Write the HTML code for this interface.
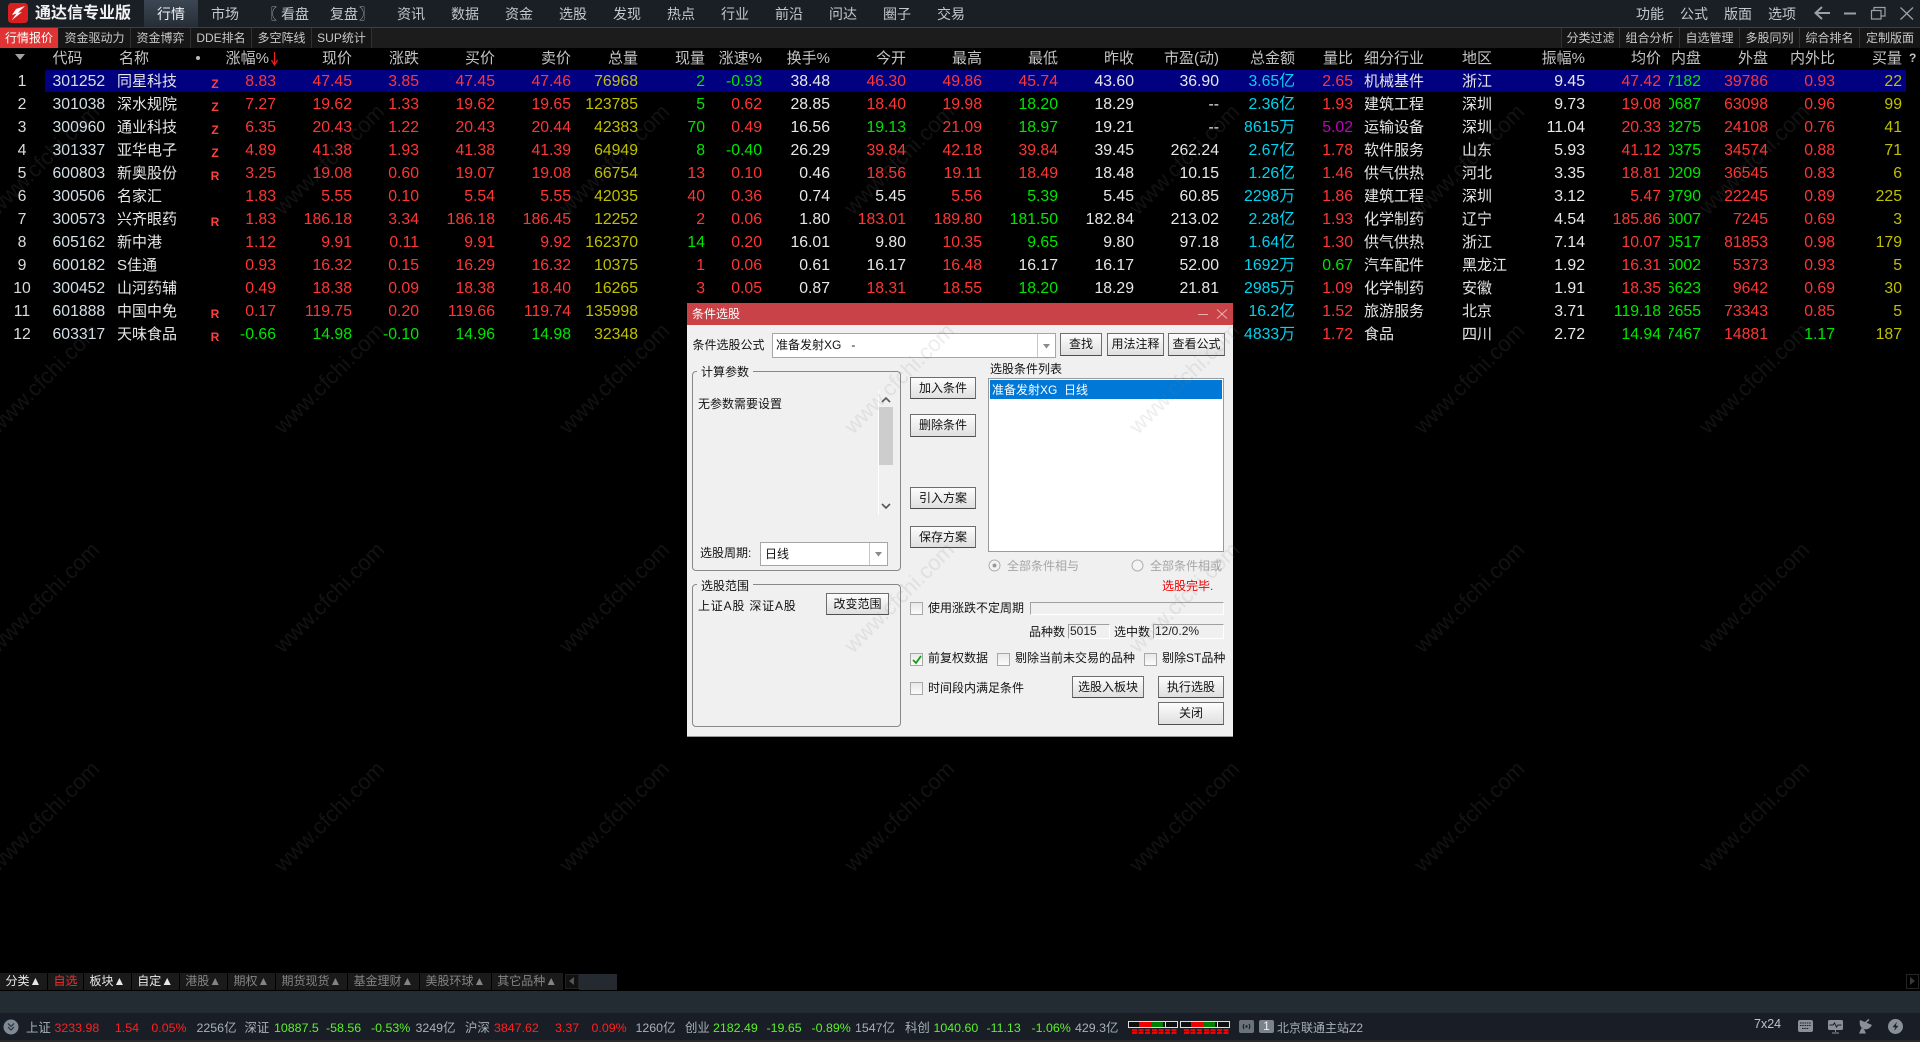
<!DOCTYPE html>
<html lang="zh-CN"><head><meta charset="utf-8"><title>通达信专业版</title>
<style>
html,body{margin:0;padding:0;background:#000;width:1920px;height:1042px;overflow:hidden}
#app{position:relative;width:1920px;height:1042px;overflow:hidden;background:#000;font-family:"Liberation Sans","Noto Sans CJK SC",sans-serif;color:#ddd}
.t,.b{position:absolute;white-space:nowrap}
.t{line-height:16px}
.m{top:6px;font-size:14px;color:#c4c8cc;line-height:16px}
.s{position:absolute;top:28px;height:20px;line-height:20px;font-size:12px;color:#c8c8c8;text-align:center;background:#161616;border-right:1px solid #303030;box-sizing:border-box}
.h{position:absolute;top:47px;line-height:23px;height:23px;font-size:15px;color:#c4c4c4;white-space:nowrap}
.row{position:absolute;left:0;width:1920px;height:23px;line-height:23px;font-size:15.8px}
.row i{position:absolute;top:0;font-style:normal;white-space:nowrap}
.ix{left:0;width:44px;text-align:center;color:#dcdcdc}
.cd{left:52.5px;color:#d4e0e6}
.nm{left:117px;font-size:15px;color:#e6e6e6}
.fl{left:210px;width:10px;text-align:center;top:3px!important;font-size:12px;font-weight:bold;color:#ff4040}
.i1{left:1364px;font-size:15px;color:#e6e6e6}
.i2{left:1462px;font-size:15px;color:#e6e6e6}
.c1{right:1644px}.c2{right:1568px}.c3{right:1501px}.c4{right:1425px}.c5{right:1349px}.c6{right:1282px}.c7{right:1215px}.c8{right:1158px}.c9{right:1090px}.c10{right:1014px}.c11{right:938px}.c12{right:862px}.c13{right:786px}.c14{right:701px}.c15{right:625px}.c16{right:567px}.c17{right:335px}.c18{right:259px}.c20{right:152px}.c21{right:85px}.c22{right:18px}
.c19{left:1669px;width:32px;overflow:hidden;direction:rtl;text-align:right;color:#00e600}
.r{color:#ff3636}.g{color:#00e600}.w{color:#e8e8e8}.y{color:#c0c000}.u{color:#00d4f0}.p{color:#c000c0}
#dlg{position:absolute;left:687px;top:303px;width:546px;height:434px;background:#f0f0f0;border-bottom:1px solid #999;box-sizing:border-box}
.d{color:#111;font-size:12px}
.btn{position:absolute;box-sizing:border-box;border:1px solid #6e6e6e;border-bottom-color:#4e4e4e;background:linear-gradient(#fdfdfd,#dfdfdf);color:#111;font-size:12px;line-height:20px;text-align:center;white-space:nowrap}
.cb{position:absolute;width:13px;height:13px;box-sizing:border-box;border:1px solid #a8a8a8;background:linear-gradient(#e8e8e8,#fbfbfb)}
.grp{position:absolute;box-sizing:border-box;border:1px solid #888;border-radius:4px}
.fld{position:absolute;box-sizing:border-box;border:1px solid #a0a0a0;border-right-color:#fff;border-bottom-color:#fff;font-size:12px;line-height:13px;color:#222}
.bt{position:absolute;top:973px;height:17px;line-height:17px;font-size:12px;text-align:center;background:#1a1a1a;color:#e8e8e8;white-space:nowrap}
.dim{color:#848484}
.st{position:absolute;top:1020px;line-height:16px;font-size:12.4px;white-space:nowrap;color:#a8b0b8}
.sr{color:#ff2020}.sg{color:#5cf02c}
</style></head><body><div id="app">

<!-- title bar -->
<div class="b" style="left:0;top:0;width:1920px;height:27px;background:#1a1f26"></div>
<div class="b" style="left:0;top:27px;width:1920px;height:1px;background:#3a4048"></div>
<svg class="b" style="left:8px;top:3px" width="20" height="20" viewBox="0 0 20 20"><rect width="20" height="20" rx="3.5" fill="#d81e1e"/><path d="M17 3 8 6 4 12 8.500 10.500 3.500 17.500 14 9 10 9.800 z" fill="#fff"/></svg>
<div class="t" style="left:35px;top:5px;font-size:16px;font-weight:bold;color:#f2f2f2;line-height:18px">通达信专业版</div>
<div class="b" style="left:144px;top:0;width:54px;height:27px;background:linear-gradient(#3c4754,#262d36)"></div>
<div class="t m" style="left:157px;color:#eef0f2">行情</div>
<div class="t m" style="left:211px">市场</div>
<div class="t m" style="left:263px">〖</div>
<div class="t m" style="left:281px">看盘</div>
<div class="t m" style="left:330px">复盘</div>
<div class="t m" style="left:359px">〗</div>
<div class="t m" style="left:397px">资讯</div>
<div class="t m" style="left:451px">数据</div>
<div class="t m" style="left:505px">资金</div>
<div class="t m" style="left:559px">选股</div>
<div class="t m" style="left:613px">发现</div>
<div class="t m" style="left:667px">热点</div>
<div class="t m" style="left:721px">行业</div>
<div class="t m" style="left:775px">前沿</div>
<div class="t m" style="left:829px">问达</div>
<div class="t m" style="left:883px">圈子</div>
<div class="t m" style="left:937px">交易</div>
<div class="t m" style="left:1636px">功能</div>
<div class="t m" style="left:1680px">公式</div>
<div class="t m" style="left:1724px">版面</div>
<div class="t m" style="left:1768px">选项</div>
<svg class="b" style="left:1812px;top:4px" width="104" height="18" viewBox="0 0 104 18" fill="none" stroke="#9ca0a5" stroke-width="1.6"><path d="M18 9H4M10 3 3.500 9 10 15" stroke-width="2"/><path d="M32 9.500H44" stroke-width="2"/><path d="M62 6V3.500H73V12H69M59.500 6.500H69V15H59.500Z" stroke-width="1.2"/><path d="M88.500 3.500 101 15.500M101 3.500 88.500 15.500" stroke-width="1.3"/></svg>

<!-- sub toolbar -->
<div class="b" style="left:0;top:28px;width:1920px;height:20px;background:#1c1c1c"></div>
<div class="s" style="left:0;width:58px;background:#e03434;color:#fff;border:0">行情报价</div>
<div class="s" style="left:59px;width:72px">资金驱动力</div>
<div class="s" style="left:131px;width:60px">资金博弈</div>
<div class="s" style="left:191px;width:61px">DDE排名</div>
<div class="s" style="left:252px;width:60px">多空阵线</div>
<div class="s" style="left:312px;width:60px">SUP统计</div>
<div class="s" style="left:1561px;width:59px;border-left:1px solid #303030">分类过滤</div>
<div class="s" style="left:1620px;width:60px">组合分析</div>
<div class="s" style="left:1680px;width:60px">自选管理</div>
<div class="s" style="left:1740px;width:60px">多股同列</div>
<div class="s" style="left:1800px;width:60px">综合排名</div>
<div class="s" style="left:1860px;width:60px;border-right:0">定制版面</div>

<!-- table header -->
<svg class="b" style="left:15px;top:54px" width="11" height="7"><path d="M0 0H10L5 6Z" fill="#a0a0a0"/></svg>
<div class="h" style="left:52.500px">代码</div>
<div class="h" style="left:119px">名称</div>
<div class="b" style="left:196px;top:56px;width:4px;height:4px;border-radius:2px;background:#bbb"></div>
<div class="h" style="right:1651px">涨幅%</div>
<svg class="b" style="left:271px;top:52px" width="7" height="14"><path d="M3.500 0V12M0.500 8 3.500 13 6.500 8" fill="none" stroke="#f02020" stroke-width="1.2"/></svg>
<div class="h" style="right:1568px">现价</div>
<div class="h" style="right:1501px">涨跌</div>
<div class="h" style="right:1425px">买价</div>
<div class="h" style="right:1349px">卖价</div>
<div class="h" style="right:1282px">总量</div>
<div class="h" style="right:1215px">现量</div>
<div class="h" style="right:1158px">涨速%</div>
<div class="h" style="right:1090px">换手%</div>
<div class="h" style="right:1014px">今开</div>
<div class="h" style="right:938px">最高</div>
<div class="h" style="right:862px">最低</div>
<div class="h" style="right:786px">昨收</div>
<div class="h" style="right:701px">市盈(动)</div>
<div class="h" style="right:625px">总金额</div>
<div class="h" style="right:567px">量比</div>
<div class="h" style="left:1364px">细分行业</div>
<div class="h" style="left:1462px">地区</div>
<div class="h" style="right:335px">振幅%</div>
<div class="h" style="right:259px">均价</div>
<div class="h" style="right:219px">内盘</div>
<div class="h" style="right:152px">外盘</div>
<div class="h" style="right:85px">内外比</div>
<div class="h" style="right:18px">买量</div>
<div class="h" style="left:1909px;font-size:12px;font-weight:bold">?</div>

<!-- rows -->
<div class="b" style="left:45px;top:70px;width:1861px;height:22px;background:#000080"></div>
<div class="row" style="top:70px"><i class="ix">1</i><i class="cd">301252</i><i class="nm">同星科技</i><i class="fl">Z</i><i class="c1 r">8.83</i><i class="c2 r">47.45</i><i class="c3 r">3.85</i><i class="c4 r">47.45</i><i class="c5 r">47.46</i><i class="c6 y">76968</i><i class="c7 g">2</i><i class="c8 g">-0.93</i><i class="c9 w">38.48</i><i class="c10 r">46.30</i><i class="c11 r">49.86</i><i class="c12 r">45.74</i><i class="c13 w">43.60</i><i class="c14 w">36.90</i><i class="c15 u">3.65亿</i><i class="c16 r">2.65</i><i class="i1">机械基件</i><i class="i2">浙江</i><i class="c17 w">9.45</i><i class="c18 r">47.42</i><i class="c19">37182</i><i class="c20 r">39786</i><i class="c21 r">0.93</i><i class="c22 y">22</i></div>
<div class="row" style="top:93px"><i class="ix">2</i><i class="cd">301038</i><i class="nm">深水规院</i><i class="fl">Z</i><i class="c1 r">7.27</i><i class="c2 r">19.62</i><i class="c3 r">1.33</i><i class="c4 r">19.62</i><i class="c5 r">19.65</i><i class="c6 y">123785</i><i class="c7 g">5</i><i class="c8 r">0.62</i><i class="c9 w">28.85</i><i class="c10 r">18.40</i><i class="c11 r">19.98</i><i class="c12 g">18.20</i><i class="c13 w">18.29</i><i class="c14 w">--</i><i class="c15 u">2.36亿</i><i class="c16 r">1.93</i><i class="i1">建筑工程</i><i class="i2">深圳</i><i class="c17 w">9.73</i><i class="c18 r">19.08</i><i class="c19">60687</i><i class="c20 r">63098</i><i class="c21 r">0.96</i><i class="c22 y">99</i></div>
<div class="row" style="top:116px"><i class="ix">3</i><i class="cd">300960</i><i class="nm">通业科技</i><i class="fl">Z</i><i class="c1 r">6.35</i><i class="c2 r">20.43</i><i class="c3 r">1.22</i><i class="c4 r">20.43</i><i class="c5 r">20.44</i><i class="c6 y">42383</i><i class="c7 g">70</i><i class="c8 r">0.49</i><i class="c9 w">16.56</i><i class="c10 g">19.13</i><i class="c11 r">21.09</i><i class="c12 g">18.97</i><i class="c13 w">19.21</i><i class="c14 w">--</i><i class="c15 u">8615万</i><i class="c16 p">5.02</i><i class="i1">运输设备</i><i class="i2">深圳</i><i class="c17 w">11.04</i><i class="c18 r">20.33</i><i class="c19">18275</i><i class="c20 r">24108</i><i class="c21 r">0.76</i><i class="c22 y">41</i></div>
<div class="row" style="top:139px"><i class="ix">4</i><i class="cd">301337</i><i class="nm">亚华电子</i><i class="fl">Z</i><i class="c1 r">4.89</i><i class="c2 r">41.38</i><i class="c3 r">1.93</i><i class="c4 r">41.38</i><i class="c5 r">41.39</i><i class="c6 y">64949</i><i class="c7 g">8</i><i class="c8 g">-0.40</i><i class="c9 w">26.29</i><i class="c10 r">39.84</i><i class="c11 r">42.18</i><i class="c12 r">39.84</i><i class="c13 w">39.45</i><i class="c14 w">262.24</i><i class="c15 u">2.67亿</i><i class="c16 r">1.78</i><i class="i1">软件服务</i><i class="i2">山东</i><i class="c17 w">5.93</i><i class="c18 r">41.12</i><i class="c19">30375</i><i class="c20 r">34574</i><i class="c21 r">0.88</i><i class="c22 y">71</i></div>
<div class="row" style="top:162px"><i class="ix">5</i><i class="cd">600803</i><i class="nm">新奥股份</i><i class="fl">R</i><i class="c1 r">3.25</i><i class="c2 r">19.08</i><i class="c3 r">0.60</i><i class="c4 r">19.07</i><i class="c5 r">19.08</i><i class="c6 y">66754</i><i class="c7 r">13</i><i class="c8 r">0.10</i><i class="c9 w">0.46</i><i class="c10 r">18.56</i><i class="c11 r">19.11</i><i class="c12 r">18.49</i><i class="c13 w">18.48</i><i class="c14 w">10.15</i><i class="c15 u">1.26亿</i><i class="c16 r">1.46</i><i class="i1">供气供热</i><i class="i2">河北</i><i class="c17 w">3.35</i><i class="c18 r">18.81</i><i class="c19">30209</i><i class="c20 r">36545</i><i class="c21 r">0.83</i><i class="c22 y">6</i></div>
<div class="row" style="top:185px"><i class="ix">6</i><i class="cd">300506</i><i class="nm">名家汇</i><i class="c1 r">1.83</i><i class="c2 r">5.55</i><i class="c3 r">0.10</i><i class="c4 r">5.54</i><i class="c5 r">5.55</i><i class="c6 y">42035</i><i class="c7 r">40</i><i class="c8 r">0.36</i><i class="c9 w">0.74</i><i class="c10 w">5.45</i><i class="c11 r">5.56</i><i class="c12 g">5.39</i><i class="c13 w">5.45</i><i class="c14 w">60.85</i><i class="c15 u">2298万</i><i class="c16 r">1.86</i><i class="i1">建筑工程</i><i class="i2">深圳</i><i class="c17 w">3.12</i><i class="c18 r">5.47</i><i class="c19">19790</i><i class="c20 r">22245</i><i class="c21 r">0.89</i><i class="c22 y">225</i></div>
<div class="row" style="top:208px"><i class="ix">7</i><i class="cd">300573</i><i class="nm">兴齐眼药</i><i class="fl">R</i><i class="c1 r">1.83</i><i class="c2 r">186.18</i><i class="c3 r">3.34</i><i class="c4 r">186.18</i><i class="c5 r">186.45</i><i class="c6 y">12252</i><i class="c7 r">2</i><i class="c8 r">0.06</i><i class="c9 w">1.80</i><i class="c10 r">183.01</i><i class="c11 r">189.80</i><i class="c12 g">181.50</i><i class="c13 w">182.84</i><i class="c14 w">213.02</i><i class="c15 u">2.28亿</i><i class="c16 r">1.93</i><i class="i1">化学制药</i><i class="i2">辽宁</i><i class="c17 w">4.54</i><i class="c18 r">185.86</i><i class="c19">6007</i><i class="c20 r">7245</i><i class="c21 r">0.69</i><i class="c22 y">3</i></div>
<div class="row" style="top:231px"><i class="ix">8</i><i class="cd">605162</i><i class="nm">新中港</i><i class="c1 r">1.12</i><i class="c2 r">9.91</i><i class="c3 r">0.11</i><i class="c4 r">9.91</i><i class="c5 r">9.92</i><i class="c6 y">162370</i><i class="c7 g">14</i><i class="c8 r">0.20</i><i class="c9 w">16.01</i><i class="c10 w">9.80</i><i class="c11 r">10.35</i><i class="c12 g">9.65</i><i class="c13 w">9.80</i><i class="c14 w">97.18</i><i class="c15 u">1.64亿</i><i class="c16 r">1.30</i><i class="i1">供气供热</i><i class="i2">浙江</i><i class="c17 w">7.14</i><i class="c18 r">10.07</i><i class="c19">80517</i><i class="c20 r">81853</i><i class="c21 r">0.98</i><i class="c22 y">179</i></div>
<div class="row" style="top:254px"><i class="ix">9</i><i class="cd">600182</i><i class="nm">S佳通</i><i class="c1 r">0.93</i><i class="c2 r">16.32</i><i class="c3 r">0.15</i><i class="c4 r">16.29</i><i class="c5 r">16.32</i><i class="c6 y">10375</i><i class="c7 r">1</i><i class="c8 r">0.06</i><i class="c9 w">0.61</i><i class="c10 w">16.17</i><i class="c11 r">16.48</i><i class="c12 w">16.17</i><i class="c13 w">16.17</i><i class="c14 w">52.00</i><i class="c15 u">1692万</i><i class="c16 g">0.67</i><i class="i1">汽车配件</i><i class="i2">黑龙江</i><i class="c17 w">1.92</i><i class="c18 r">16.31</i><i class="c19">5002</i><i class="c20 r">5373</i><i class="c21 r">0.93</i><i class="c22 y">5</i></div>
<div class="row" style="top:277px"><i class="ix">10</i><i class="cd">300452</i><i class="nm">山河药辅</i><i class="c1 r">0.49</i><i class="c2 r">18.38</i><i class="c3 r">0.09</i><i class="c4 r">18.38</i><i class="c5 r">18.40</i><i class="c6 y">16265</i><i class="c7 r">3</i><i class="c8 r">0.05</i><i class="c9 w">0.87</i><i class="c10 r">18.31</i><i class="c11 r">18.55</i><i class="c12 g">18.20</i><i class="c13 w">18.29</i><i class="c14 w">21.81</i><i class="c15 u">2985万</i><i class="c16 r">1.09</i><i class="i1">化学制药</i><i class="i2">安徽</i><i class="c17 w">1.91</i><i class="c18 r">18.35</i><i class="c19">6623</i><i class="c20 r">9642</i><i class="c21 r">0.69</i><i class="c22 y">30</i></div>
<div class="row" style="top:300px"><i class="ix">11</i><i class="cd">601888</i><i class="nm">中国中免</i><i class="fl">R</i><i class="c1 r">0.17</i><i class="c2 r">119.75</i><i class="c3 r">0.20</i><i class="c4 r">119.66</i><i class="c5 r">119.74</i><i class="c6 y">135998</i><i class="c15 u">16.2亿</i><i class="c16 r">1.52</i><i class="i1">旅游服务</i><i class="i2">北京</i><i class="c17 w">3.71</i><i class="c18 g">119.18</i><i class="c19">62655</i><i class="c20 r">73343</i><i class="c21 r">0.85</i><i class="c22 y">5</i></div>
<div class="row" style="top:323px"><i class="ix">12</i><i class="cd">603317</i><i class="nm">天味食品</i><i class="fl">R</i><i class="c1 g">-0.66</i><i class="c2 g">14.98</i><i class="c3 g">-0.10</i><i class="c4 g">14.96</i><i class="c5 g">14.98</i><i class="c6 y">32348</i><i class="c15 u">4833万</i><i class="c16 r">1.72</i><i class="i1">食品</i><i class="i2">四川</i><i class="c17 w">2.72</i><i class="c18 g">14.94</i><i class="c19">17467</i><i class="c20 r">14881</i><i class="c21 g">1.17</i><i class="c22 y">187</i></div>

<!-- dialog -->
<div id="dlg"></div>
<div class="b" style="left:687px;top:303px;width:546px;height:22px;background:#c94247"></div>
<div class="t" style="left:692px;top:306px;font-size:12px;color:#fff">条件选股</div>
<svg class="b" style="left:1195px;top:306px" width="36" height="16" fill="none" stroke="#eab0b0" stroke-width="1"><path d="M3 8.500H13M22 3.500 32 12.500M32 3.500 22 12.500"/></svg>

<div class="t d" style="left:692.500px;top:337px">条件选股公式</div>
<div class="b" style="left:772px;top:333px;width:284px;height:25px;background:#fff;border:1px solid #a6a6a6;box-sizing:border-box"></div>
<div class="b" style="left:1037px;top:334px;width:1px;height:23px;background:#c8c8c8"></div>
<svg class="b" style="left:1043px;top:344px" width="7" height="5"><path d="M0 0H7L3.500 4.500Z" fill="#8a8a8a"/></svg>
<div class="t d" style="left:776px;top:337px">准备发射XG &nbsp;&nbsp;-</div>
<div class="btn" style="left:1060px;top:333px;width:42px;height:23px">查找</div>
<div class="btn" style="left:1107px;top:333px;width:57px;height:23px">用法注释</div>
<div class="btn" style="left:1168px;top:333px;width:57px;height:23px">查看公式</div>

<div class="t d" style="left:990px;top:361px">选股条件列表</div>
<div class="b" style="left:988px;top:378px;width:236px;height:174px;background:#fff;border:1px solid #9a9a9a;box-sizing:border-box"></div>
<div class="b" style="left:990px;top:380px;width:232px;height:19px;background:#0078d7"></div>
<div class="t" style="left:992px;top:382px;font-size:12px;color:#fff">准备发射XG&nbsp;&nbsp;日线</div>

<div class="grp" style="left:692px;top:371px;width:209px;height:200px"></div>
<div class="t d" style="left:697px;top:364px;background:#f0f0f0;padding:0 4px">计算参数</div>
<div class="t d" style="left:698px;top:396px">无参数需要设置</div>
<div class="b" style="left:878px;top:390px;width:1px;height:125px;background:#fff"></div>
<div class="b" style="left:879px;top:407px;width:14px;height:58px;background:#cdcdcd"></div>
<svg class="b" style="left:881px;top:396px" width="10" height="7" fill="none" stroke="#555" stroke-width="1.6"><path d="M1 6 5 2 9 6"/></svg>
<svg class="b" style="left:881px;top:503px" width="10" height="7" fill="none" stroke="#555" stroke-width="1.6"><path d="M1 1 5 5 9 1"/></svg>
<div class="t d" style="left:700px;top:545px">选股周期:</div>
<div class="b" style="left:760px;top:542px;width:128px;height:24px;background:#fff;border:1px solid #a6a6a6;box-sizing:border-box"></div>
<div class="b" style="left:869px;top:543px;width:1px;height:22px;background:#c8c8c8"></div>
<svg class="b" style="left:875px;top:552px" width="7" height="5"><path d="M0 0H7L3.500 4.500Z" fill="#8a8a8a"/></svg>
<div class="t d" style="left:765px;top:546px">日线</div>

<div class="btn" style="left:910px;top:377px;width:66px;height:22px">加入条件</div>
<div class="btn" style="left:910px;top:414px;width:66px;height:23px">删除条件</div>
<div class="btn" style="left:910px;top:487px;width:66px;height:22px">引入方案</div>
<div class="btn" style="left:910px;top:526px;width:66px;height:22px">保存方案</div>

<svg class="b" style="left:988px;top:559px" width="13" height="13"><circle cx="6.500" cy="6.500" r="5.500" fill="#f4f4f4" stroke="#b0b0b0"/><circle cx="6.500" cy="6.500" r="2" fill="#999"/></svg>
<div class="t" style="left:1007px;top:558px;font-size:12px;color:#a6a6a6">全部条件相与</div>
<svg class="b" style="left:1131px;top:559px" width="13" height="13"><circle cx="6.500" cy="6.500" r="5.500" fill="#f4f4f4" stroke="#b0b0b0"/></svg>
<div class="t" style="left:1150px;top:558px;font-size:12px;color:#a6a6a6">全部条件相或</div>
<div class="t" style="left:1162px;top:578px;font-size:12px;color:#f00000">选股完毕.</div>

<div class="grp" style="left:692px;top:584px;width:209px;height:143px"></div>
<div class="t d" style="left:697px;top:578px;background:#f0f0f0;padding:0 4px">选股范围</div>
<div class="t d" style="left:698px;top:598px;letter-spacing:.8px">上证A股 深证A股</div>
<div class="btn" style="left:826px;top:593px;width:63px;height:22px">改变范围</div>

<div class="cb" style="left:910px;top:602px"></div>
<div class="t d" style="left:928px;top:600px">使用涨跌不定周期</div>
<div class="fld" style="left:1030px;top:602px;width:194px;height:13px"></div>
<div class="t d" style="left:1029px;top:624px">品种数</div>
<div class="fld" style="left:1068px;top:624px;width:42px;height:15px;padding-left:1px">5015</div>
<div class="t d" style="left:1114px;top:624px">选中数</div>
<div class="fld" style="left:1153px;top:624px;width:71px;height:15px;padding-left:1px">12/0.2%</div>

<div class="cb" style="left:910px;top:653px"></div>
<svg class="b" style="left:912px;top:655px" width="10" height="10"><path d="M1 5 4 8 9 1" fill="none" stroke="#1a9a1a" stroke-width="1.800"/></svg>
<div class="t d" style="left:928px;top:650px">前复权数据</div>
<div class="cb" style="left:997px;top:653px"></div>
<div class="t d" style="left:1015px;top:650px">剔除当前未交易的品种</div>
<div class="cb" style="left:1144px;top:653px"></div>
<div class="t d" style="left:1162px;top:650px">剔除ST品种</div>
<div class="cb" style="left:910px;top:682px"></div>
<div class="t d" style="left:928px;top:680px">时间段内满足条件</div>
<div class="btn" style="left:1072px;top:676px;width:72px;height:22px">选股入板块</div>
<div class="btn" style="left:1158px;top:676px;width:66px;height:22px">执行选股</div>
<div class="btn" style="left:1158px;top:702px;width:66px;height:23px">关闭</div>

<!-- bottom tabs -->
<div class="bt" style="left:0;width:47px">分类▲</div>
<div class="bt" style="left:48px;width:35px;color:#f03030">自选</div>
<div class="bt" style="left:84px;width:47px">板块▲</div>
<div class="bt" style="left:132px;width:46.500px">自定▲</div>
<div class="bt dim" style="left:179.500px;width:47.500px">港股▲</div>
<div class="bt dim" style="left:228px;width:47px">期权▲</div>
<div class="bt dim" style="left:276px;width:71px">期货现货▲</div>
<div class="bt dim" style="left:348px;width:71px">基金理财▲</div>
<div class="bt dim" style="left:420px;width:71px">美股环球▲</div>
<div class="bt dim" style="left:492px;width:70.500px">其它品种▲</div>
<div class="b" style="left:565px;top:974px;width:14px;height:15px;background:#111;border:1px solid #222;box-sizing:border-box"></div>
<svg class="b" style="left:569px;top:977px" width="6" height="9"><path d="M5 0V8L0 4Z" fill="#555"/></svg>
<div class="b" style="left:579px;top:974px;width:38px;height:16px;background:#252a30"></div>
<div class="b" style="left:1906px;top:974px;width:13px;height:15px;border:1px solid #252525;box-sizing:border-box"></div>
<svg class="b" style="left:1910px;top:977px" width="6" height="9"><path d="M0 0V8L5 4Z" fill="#3a3a3a"/></svg>

<!-- status -->
<div class="b" style="left:0;top:991px;width:1920px;height:22px;background:#232b33"></div>
<div class="b" style="left:0;top:1013px;width:1920px;height:27px;background:#191e26"></div>
<div class="b" style="left:0;top:1040px;width:1920px;height:2px;background:#2a2a26"></div>
<svg class="b" style="left:3px;top:1019px" width="16" height="16" fill="none" stroke="#2a3038" stroke-width="1.200"><circle cx="8" cy="8" r="7.500" fill="#7f8a96" stroke="none"/><path d="M5 4.500 8 7.500 11 4.500M5 8 8 11 11 8"/></svg>
<div class="st" style="left:26px">上证</div><div class="st sr" style="left:54.500px">3233.98</div><div class="st sr" style="right:1781px">1.54</div><div class="st sr" style="right:1733.500px">0.05%</div><div class="st" style="left:196.500px">2256亿</div>
<div class="st" style="left:244.500px">深证</div><div class="st sg" style="left:274px">10887.5</div><div class="st sg" style="left:326px">-58.56</div><div class="st sg" style="left:371px">-0.53%</div><div class="st" style="left:415.500px">3249亿</div>
<div class="st" style="left:465px">沪深</div><div class="st sr" style="left:494px">3847.62</div><div class="st sr" style="left:555px">3.37</div><div class="st sr" style="left:591.500px">0.09%</div><div class="st" style="left:635.500px">1260亿</div>
<div class="st" style="left:685px">创业</div><div class="st sg" style="left:713px">2182.49</div><div class="st sg" style="left:766.500px">-19.65</div><div class="st sg" style="left:811.500px">-0.89%</div><div class="st" style="left:855px">1547亿</div>
<div class="st" style="left:905px">科创</div><div class="st sg" style="left:933.500px">1040.60</div><div class="st sg" style="left:986.500px">-11.13</div><div class="st sg" style="left:1031.500px">-1.06%</div><div class="st" style="left:1075px">429.3亿</div>

<div class="b" style="left:1128px;top:1021px;width:50px;height:7px;background:#101010;border:1px solid #ddd;box-sizing:border-box"></div>
<div class="b" style="left:1139px;top:1022px;width:13px;height:5px;background:#f00000"></div>
<div class="b" style="left:1152px;top:1022px;width:11px;height:5px;background:#008000"></div>
<div class="b" style="left:1165px;top:1022px;width:1px;height:5px;background:#ddd"></div>
<div class="b" style="left:1180px;top:1021px;width:50px;height:7px;background:#101010;border:1px solid #ddd;box-sizing:border-box"></div>
<div class="b" style="left:1191px;top:1022px;width:13px;height:5px;background:#f00000"></div>
<div class="b" style="left:1204px;top:1022px;width:11px;height:5px;background:#008000"></div>
<div class="b" style="left:1217px;top:1022px;width:1px;height:5px;background:#ddd"></div>
<div class="b" style="left:1132px;top:1029px;width:46px;height:2px;background:repeating-linear-gradient(90deg,#f00000 0,#f00000 5px,transparent 5px,transparent 6.600px)"></div>
<div class="b" style="left:1132px;top:1032px;width:46px;height:2px;background:repeating-linear-gradient(90deg,#f00000 0,#f00000 5px,transparent 5px,transparent 6.600px)"></div>
<div class="b" style="left:1184px;top:1029px;width:46px;height:2px;background:repeating-linear-gradient(90deg,#f00000 0,#f00000 5px,transparent 5px,transparent 6.600px)"></div>
<div class="b" style="left:1184px;top:1032px;width:46px;height:2px;background:repeating-linear-gradient(90deg,#f00000 0,#f00000 5px,transparent 5px,transparent 6.600px)"></div>

<svg class="b" style="left:1239px;top:1020px" width="15" height="13"><rect width="15" height="13" rx="2" fill="#6a727c"/><path d="M5 4Q3.500 6.500 5 9M10 4Q11.500 6.500 10 9" fill="none" stroke="#1a1f26" stroke-width="1.200"/><circle cx="7.500" cy="6.500" r="1.200" fill="#1a1f26"/></svg>
<div class="b" style="left:1259px;top:1020px;width:15px;height:13px;border-radius:2px;background:#7a828c;color:#eee;font-size:12px;line-height:13px;text-align:center">1</div>
<div class="st" style="left:1277px;font-size:12px;top:1020px">北京联通主站Z2</div>

<div class="st" style="left:1754px;top:1016px;font-size:12.500px;color:#b8c4d0">7x24</div>
<svg class="b" style="left:1798px;top:1020px" width="15" height="12"><rect width="15" height="12" rx="2" fill="#8a9099"/><path d="M2 3H13M2 5.500H13M4 8.500H11" stroke="#191e26" stroke-width="1" stroke-dasharray="1.500 .8" fill="none"/></svg>
<svg class="b" style="left:1828px;top:1020px" width="15" height="14"><rect width="15" height="10" rx="1.500" fill="#8a9099"/><path d="M1.500 5H5L6.500 3 8.500 7 10 5H13.500" stroke="#191e26" fill="none"/><path d="M7 10H8V12H7ZM4 12.500H11V13.500H4Z" fill="#8a9099"/></svg>
<svg class="b" style="left:1858px;top:1018px" width="15" height="16"><path d="M2 2Q0.500 9 6 11 11 12.500 14 7Z" fill="#8a9099"/><path d="M7 5 11 1.500" stroke="#8a9099" stroke-width="1.500"/><path d="M3.500 10 1 15.500H8L6 11Z" fill="#8a9099"/></svg>
<svg class="b" style="left:1888px;top:1019px" width="15" height="15"><circle cx="7.500" cy="7.500" r="7.500" fill="#8a9099"/><path d="M9 2.800 4.500 8.300H7.300L6 12 10.500 6.700H7.700Z" fill="#191e26"/></svg>

<!-- watermark -->
<svg class="b" style="left:0;top:0" width="1920" height="1042" font-family="'Liberation Sans',sans-serif" font-size="22" fill="#808080" fill-opacity=".14">
<text transform="translate(-2,216) rotate(-45)">www.cfchi.com</text><text transform="translate(283,216) rotate(-45)">www.cfchi.com</text><text transform="translate(568,216) rotate(-45)">www.cfchi.com</text><text transform="translate(853,216) rotate(-45)">www.cfchi.com</text><text transform="translate(1138,216) rotate(-45)">www.cfchi.com</text><text transform="translate(1423,216) rotate(-45)">www.cfchi.com</text><text transform="translate(1708,216) rotate(-45)">www.cfchi.com</text>
<text transform="translate(-2,435) rotate(-45)">www.cfchi.com</text><text transform="translate(283,435) rotate(-45)">www.cfchi.com</text><text transform="translate(568,435) rotate(-45)">www.cfchi.com</text><text transform="translate(853,435) rotate(-45)">www.cfchi.com</text><text transform="translate(1138,435) rotate(-45)">www.cfchi.com</text><text transform="translate(1423,435) rotate(-45)">www.cfchi.com</text><text transform="translate(1708,435) rotate(-45)">www.cfchi.com</text>
<text transform="translate(-2,654) rotate(-45)">www.cfchi.com</text><text transform="translate(283,654) rotate(-45)">www.cfchi.com</text><text transform="translate(568,654) rotate(-45)">www.cfchi.com</text><text transform="translate(853,654) rotate(-45)">www.cfchi.com</text><text transform="translate(1138,654) rotate(-45)">www.cfchi.com</text><text transform="translate(1423,654) rotate(-45)">www.cfchi.com</text><text transform="translate(1708,654) rotate(-45)">www.cfchi.com</text>
<text transform="translate(-2,873) rotate(-45)">www.cfchi.com</text><text transform="translate(283,873) rotate(-45)">www.cfchi.com</text><text transform="translate(568,873) rotate(-45)">www.cfchi.com</text><text transform="translate(853,873) rotate(-45)">www.cfchi.com</text><text transform="translate(1138,873) rotate(-45)">www.cfchi.com</text><text transform="translate(1423,873) rotate(-45)">www.cfchi.com</text><text transform="translate(1708,873) rotate(-45)">www.cfchi.com</text>
</svg>

</div></body></html>
